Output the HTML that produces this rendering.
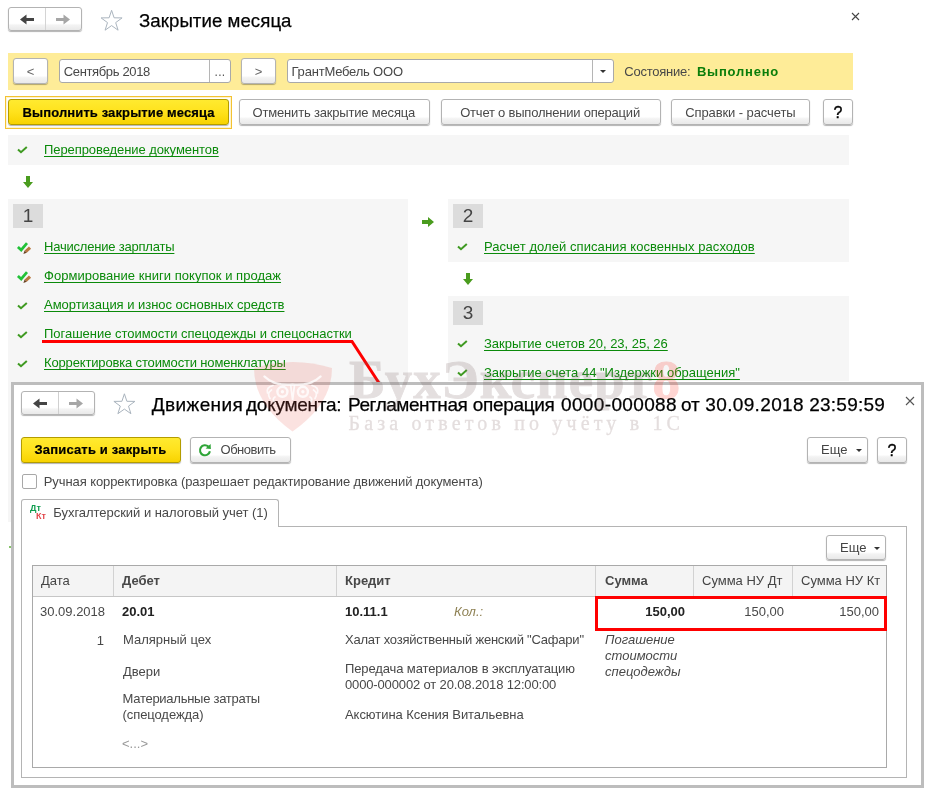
<!DOCTYPE html>
<html lang="ru">
<head>
<meta charset="utf-8">
<title>Закрытие месяца</title>
<style>
html,body{margin:0;padding:0;background:#fff;}
body{width:932px;height:793px;position:relative;overflow:hidden;font-family:"Liberation Sans",sans-serif;font-size:13px;color:#333;}
.a{position:absolute;white-space:nowrap;}
.btn{position:absolute;box-sizing:border-box;border:1px solid #b3b3b3;border-radius:3px;background:linear-gradient(#ffffff 0%,#ffffff 70%,#f3f3f3 78%,#e9e9e9 100%);box-shadow:0 1px 1px rgba(0,0,0,.3);text-align:center;white-space:nowrap;color:#444;}
.ybtn{position:absolute;box-sizing:border-box;border:1px solid #b39c00;border-radius:3px;background:linear-gradient(#ffea30 0%,#ffe21c 50%,#f8d300 100%);box-shadow:0 1px 1px rgba(0,0,0,.3);text-align:center;white-space:nowrap;color:#111;font-weight:bold;}
.inp{position:absolute;box-sizing:border-box;border:1px solid #a9a9a9;border-radius:3px;background:#fff;white-space:nowrap;color:#333;}
.lnk{position:absolute;white-space:nowrap;color:#0a8a0a;text-decoration:underline;text-decoration-thickness:1px;text-underline-offset:2px;text-decoration-skip-ink:none;}
.gray{position:absolute;background:#f6f6f6;}
.num{position:absolute;background:#dcdcdc;color:#444;font-size:19px;text-align:center;}
svg{position:absolute;overflow:visible;}
.t{position:absolute;white-space:nowrap;color:#484848;}
</style>
</head>
<body>
<div id="root" style="position:absolute;left:0;top:0;width:932px;height:793px;overflow:hidden;will-change:transform;">

<!-- ================= MAIN WINDOW ================= -->
<div id="nav1" class="btn" style="left:8px;top:7px;width:74px;height:24px;"></div>
<div class="a" style="left:45px;top:8px;width:1px;height:22px;background:#d4d4d4;"></div>
<svg style="left:20px;top:14px;" width="14" height="11" viewBox="0 0 14 11"><path d="M0 5.5 L6.5 0.5 L6.5 4 L14 4 L14 7 L6.5 7 L6.5 10.5 Z" fill="#444"/></svg>
<svg style="left:56px;top:14px;" width="14" height="11" viewBox="0 0 14 11"><path d="M14 5.5 L7.5 0.5 L7.5 4 L0 4 L0 7 L7.5 7 L7.5 10.5 Z" fill="#a6a6a6"/></svg>
<svg style="left:0;top:0;" width="140" height="40" viewBox="0 0 140 40"><path d="M111.6 10.3 L114.1 17.8 L122.1 17.9 L115.7 22.6 L118.1 30.2 L111.6 25.6 L105.1 30.2 L107.5 22.6 L101.1 17.9 L109.1 17.8 Z" fill="#fff" stroke="#aab4be" stroke-width="1"/></svg>
<div class="a" style="left:139px;top:10px;letter-spacing:0.049px;font-size:18.67px;color:#000;-webkit-text-stroke:0.25px #000;">Закрытие месяца</div>
<svg style="left:852px;top:13px;" width="7" height="7" viewBox="0 0 7 7"><path d="M0 0 L7 7 M7 0 L0 7" stroke="#444" stroke-width="1.1" fill="none"/></svg>

<div id="yband" class="a" style="left:8px;top:53px;width:845px;height:37px;background:#feec98;"></div>
<div class="btn" style="left:13px;top:58px;width:35px;height:26px;line-height:25px;color:#666;">&lt;</div>
<div class="inp" style="left:59px;top:59px;width:172px;height:24px;"></div>
<div class="t" style="left:63.75px;top:64px;letter-spacing:-0.357px;">Сентябрь 2018</div>
<div class="a" style="left:209px;top:60px;width:1px;height:22px;background:#b5b5b5;"></div>
<div class="a" style="left:214.5px;top:65px;color:#555;font-size:12px;letter-spacing:0.3px;">...</div>
<div class="btn" style="left:241px;top:58px;width:35px;height:26px;line-height:25px;color:#666;">&gt;</div>
<div class="inp" style="left:287px;top:59px;width:327px;height:24px;"></div>
<div class="t" style="left:291.5px;top:64px;letter-spacing:-0.205px;">ГрантМебель ООО</div>
<div class="a" style="left:592px;top:60px;width:1px;height:22px;background:#b5b5b5;"></div>
<svg style="left:600px;top:70px;" width="6" height="3" viewBox="0 0 6 3"><path d="M0 0 L6 0 L3 3 Z" fill="#333"/></svg>
<div class="t" style="left:624.3px;top:64px;letter-spacing:-0.254px;">Состояние:</div>
<div class="a" style="left:696.9px;top:64px;letter-spacing:0.788px;color:#0a7d0a;font-weight:bold;">Выполнено</div>

<div class="a" style="left:5px;top:96px;width:227px;height:33px;box-sizing:border-box;border:1px solid #f3c232;box-shadow:inset 0 0 0 1px #fdf3cf;background:#fff;"></div>
<div id="yb1" class="ybtn" style="left:8px;top:99px;width:221px;height:26px;"></div>
<div class="a" style="left:22.5px;top:105px;letter-spacing:0.117px;color:#000;font-weight:bold;-webkit-text-stroke:0.2px #000;">Выполнить закрытие месяца</div>
<div class="btn" style="left:239px;top:99px;width:191px;height:26px;"></div>
<div class="t" style="left:252.6px;top:105px;letter-spacing:-0.183px;">Отменить закрытие месяца</div>
<div class="btn" style="left:441px;top:99px;width:220px;height:26px;"></div>
<div class="t" style="left:460.2px;top:105px;letter-spacing:-0.213px;">Отчет о выполнении операций</div>
<div class="btn" style="left:671px;top:99px;width:139px;height:26px;"></div>
<div class="t" style="left:685.2px;top:105px;letter-spacing:-0.093px;">Справки - расчеты</div>
<div class="btn" style="left:823px;top:99px;width:30px;height:26px;line-height:25px;font-size:16px;color:#000;-webkit-text-stroke:0.35px #000;">?</div>

<div class="gray" style="left:8px;top:135px;width:841px;height:30px;"></div>
<div class="lnk" style="left:44px;top:142px;letter-spacing:-0.077px;">Перепроведение документов</div>

<!-- block 1 -->
<div class="gray" style="left:8px;top:199px;width:400px;height:323px;"></div>
<div class="a" style="left:9px;top:546px;width:2px;height:2px;background:#86c46a;"></div>
<div class="num" style="left:13px;top:204px;width:30px;height:24px;line-height:24px;">1</div>
<div class="lnk" style="left:44px;top:239px;letter-spacing:-0.204px;">Начисление зарплаты</div>
<div class="lnk" style="left:44px;top:268px;letter-spacing:0.035px;">Формирование книги покупок и продаж</div>
<div class="lnk" style="left:44px;top:297px;letter-spacing:-0.028px;">Амортизация и износ основных средств</div>
<div class="lnk" style="left:44px;top:326px;letter-spacing:-0.025px;">Погашение стоимости спецодежды и спецоснастки</div>
<div class="lnk" style="left:44px;top:355px;letter-spacing:-0.153px;">Корректировка стоимости номенклатуры</div>

<!-- block 2 -->
<div class="gray" style="left:448px;top:199px;width:401px;height:63px;"></div>
<div class="num" style="left:453px;top:204px;width:30px;height:24px;line-height:24px;">2</div>
<div class="lnk" style="left:484px;top:239px;letter-spacing:0.065px;">Расчет долей списания косвенных расходов</div>

<!-- block 3 -->
<div class="gray" style="left:448px;top:296px;width:401px;height:85px;"></div>
<div class="num" style="left:453px;top:301px;width:30px;height:24px;line-height:24px;">3</div>
<div class="lnk" style="left:484px;top:336px;letter-spacing:-0.021px;">Закрытие счетов 20, 23, 25, 26</div>
<div class="lnk" style="left:484px;top:365px;letter-spacing:-0.003px;">Закрытие счета 44 "Издержки обращения"</div>

<svg style="left:17px;top:146px;" width="11" height="8" viewBox="0 0 11 8"><path d="M1 3.4 L4 6.2 L9.8 1" fill="none" stroke="#3f9a22" stroke-width="2"/></svg>
<svg style="left:23px;top:176px;" width="10" height="12" viewBox="0 0 10 12"><path d="M3 0 L7 0 L7 6 L10 6 L5 12 L0 6 L3 6 Z" fill="#4a9c1e"/></svg>
<svg style="left:17px;top:242px;" width="15" height="13" viewBox="0 0 15 13"><path d="M0.9 4.9 L4.2 8 L10 1.2" fill="none" stroke="#22c238" stroke-width="2.7"/><path d="M8.7 9.7 L13 5.7" fill="none" stroke="#b8773e" stroke-width="3.1"/><path d="M7.6 8.6 L9.8 10.8 L6.4 12 Z" fill="#6b4526"/></svg>
<svg style="left:17px;top:271px;" width="15" height="13" viewBox="0 0 15 13"><path d="M0.9 4.9 L4.2 8 L10 1.2" fill="none" stroke="#22c238" stroke-width="2.7"/><path d="M8.7 9.7 L13 5.7" fill="none" stroke="#b8773e" stroke-width="3.1"/><path d="M7.6 8.6 L9.8 10.8 L6.4 12 Z" fill="#6b4526"/></svg>
<svg style="left:17px;top:302px;" width="11" height="8" viewBox="0 0 11 8"><path d="M1 3.4 L4 6.2 L9.8 1" fill="none" stroke="#3f9a22" stroke-width="2"/></svg>
<svg style="left:17px;top:331px;" width="11" height="8" viewBox="0 0 11 8"><path d="M1 3.4 L4 6.2 L9.8 1" fill="none" stroke="#3f9a22" stroke-width="2"/></svg>
<svg style="left:17px;top:360px;" width="11" height="8" viewBox="0 0 11 8"><path d="M1 3.4 L4 6.2 L9.8 1" fill="none" stroke="#3f9a22" stroke-width="2"/></svg>
<svg style="left:422px;top:217px;" width="12" height="10" viewBox="0 0 12 10"><path d="M0 3 L6 3 L6 0 L12 5 L6 10 L6 7 L0 7 Z" fill="#4a9c1e"/></svg>
<svg style="left:457px;top:243px;" width="11" height="8" viewBox="0 0 11 8"><path d="M1 3.4 L4 6.2 L9.8 1" fill="none" stroke="#3f9a22" stroke-width="2"/></svg>
<svg style="left:463px;top:273px;" width="10" height="12" viewBox="0 0 10 12"><path d="M3 0 L7 0 L7 6 L10 6 L5 12 L0 6 L3 6 Z" fill="#4a9c1e"/></svg>
<svg style="left:457px;top:340px;" width="11" height="8" viewBox="0 0 11 8"><path d="M1 3.4 L4 6.2 L9.8 1" fill="none" stroke="#3f9a22" stroke-width="2"/></svg>
<svg style="left:457px;top:369px;" width="11" height="8" viewBox="0 0 11 8"><path d="M1 3.4 L4 6.2 L9.8 1" fill="none" stroke="#3f9a22" stroke-width="2"/></svg>
<svg style="left:0;top:0;" width="932" height="400" viewBox="0 0 932 400"><path d="M42 341.5 L352 341.5 L379 383" fill="none" stroke="#ff0000" stroke-width="3" stroke-linejoin="miter"/></svg>
<!-- ================= DIALOG ================= -->
<div id="dlg" class="a" style="left:11px;top:382px;width:913px;height:406px;box-sizing:border-box;border:3px solid #bdbdbd;background:#fff;"></div>

<div id="nav2" class="btn" style="left:21px;top:391px;width:74px;height:24px;"></div>
<div class="a" style="left:58px;top:392px;width:1px;height:22px;background:#d0d0d0;"></div>
<svg style="left:33px;top:398px;" width="14" height="11" viewBox="0 0 14 11"><path d="M0 5.5 L6.5 0.5 L6.5 4 L14 4 L14 7 L6.5 7 L6.5 10.5 Z" fill="#444"/></svg>
<svg style="left:69px;top:398px;" width="14" height="11" viewBox="0 0 14 11"><path d="M14 5.5 L7.5 0.5 L7.5 4 L0 4 L0 7 L7.5 7 L7.5 10.5 Z" fill="#a6a6a6"/></svg>
<svg style="left:0;top:380px;" width="160" height="40" viewBox="0 380 160 40"><path d="M124.4 393.8 L126.9 401.3 L134.9 401.4 L128.5 406.1 L130.9 413.7 L124.4 409.1 L117.9 413.7 L120.3 406.1 L113.9 401.4 L121.9 401.3 Z" fill="#fff" stroke="#aab4be" stroke-width="1"/></svg>
<div class="a" style="left:151.8px;top:394px;letter-spacing:0.393px;font-size:19px;color:#000;-webkit-text-stroke:0.25px #000;">Движения</div>
<div class="a" style="left:246.0px;top:394px;letter-spacing:-0.26px;font-size:19px;color:#000;-webkit-text-stroke:0.25px #000;">документа:</div>
<div class="a" style="left:348.1px;top:394px;letter-spacing:-0.459px;font-size:19px;color:#000;-webkit-text-stroke:0.25px #000;">Регламентная</div>
<div class="a" style="left:472.8px;top:394px;letter-spacing:-0.335px;font-size:19px;color:#000;-webkit-text-stroke:0.25px #000;">операция</div>
<div class="a" style="left:561.0px;top:394px;letter-spacing:0.36px;font-size:19px;color:#000;-webkit-text-stroke:0.25px #000;">0000-000088</div>
<div class="a" style="left:680.9px;top:394px;letter-spacing:0.041px;font-size:19px;color:#000;-webkit-text-stroke:0.25px #000;">от</div>
<div class="a" style="left:705.3px;top:394px;letter-spacing:0.356px;font-size:19px;color:#000;-webkit-text-stroke:0.25px #000;">30.09.2018</div>
<div class="a" style="left:809.3px;top:394px;letter-spacing:0.219px;font-size:19px;color:#000;-webkit-text-stroke:0.25px #000;">23:59:59</div>
<svg style="left:905.5px;top:397px;" width="8" height="8" viewBox="0 0 8 8"><path d="M0 0 L8 8 M8 0 L0 8" stroke="#555" stroke-width="1.1" fill="none"/></svg>

<div id="yb2" class="ybtn" style="left:21px;top:437px;width:160px;height:26px;"></div>
<div class="a" style="left:34.5px;top:442px;letter-spacing:0.171px;color:#000;font-weight:bold;-webkit-text-stroke:0.2px #000;">Записать и закрыть</div>
<div id="upd" class="btn" style="left:190px;top:437px;width:101px;height:26px;"></div>
<div class="t" style="left:220.5px;top:442px;letter-spacing:-0.468px;">Обновить</div>
<svg style="left:198px;top:443px;" width="14" height="14" viewBox="0 0 14 14"><path d="M10.4 3.6 A5 5 0 1 0 11.9 8.2" fill="none" stroke="#2fa538" stroke-width="2.1"/><path d="M7.6 5.6 L12.9 5.9 L12.6 0.9 Z" fill="#2fa538"/></svg>
<div id="more1" class="btn" style="left:807px;top:437px;width:61px;height:26px;line-height:24px;text-align:left;padding-left:13px;">Еще</div>
<svg style="left:856px;top:449px;" width="6" height="3" viewBox="0 0 6 3"><path d="M0 0 L6 0 L3 3 Z" fill="#333"/></svg>
<div class="btn" style="left:877px;top:437px;width:30px;height:26px;line-height:25px;font-size:16px;color:#000;-webkit-text-stroke:0.35px #000;">?</div>

<div class="a" style="left:22px;top:474px;width:15px;height:15px;box-sizing:border-box;border:1px solid #a8a8a8;border-radius:2px;background:#fff;"></div>
<div class="t" style="left:43.75px;top:474px;letter-spacing:-0.085px;">Ручная корректировка (разрешает редактирование движений документа)</div>

<!-- tab panel -->
<div id="panel" class="a" style="left:21px;top:526px;width:886px;height:252px;box-sizing:border-box;border:1px solid #b4b4b4;"></div>
<div id="tab" class="a" style="left:21px;top:499px;width:258px;height:28px;box-sizing:border-box;border:1px solid #b4b4b4;border-bottom:none;border-radius:3px 3px 0 0;background:#fff;"></div>
<div class="a" style="left:30px;top:504px;font-size:9px;font-weight:bold;color:#0f9d4f;line-height:9px;">Дт</div>
<div class="a" style="left:36px;top:511.5px;font-size:9px;font-weight:bold;color:#e2474b;line-height:9px;">Кт</div>
<div class="t" style="left:53.3px;top:505px;letter-spacing:-0.036px;">Бухгалтерский и налоговый учет (1)</div>

<div id="more2" class="btn" style="left:826px;top:535px;width:60px;height:25px;line-height:23px;text-align:left;padding-left:13px;">Еще</div>
<svg style="left:874px;top:547px;" width="6" height="3" viewBox="0 0 6 3"><path d="M0 0 L6 0 L3 3 Z" fill="#333"/></svg>

<!-- table -->
<div id="tbl" class="a" style="left:32px;top:565px;width:855px;height:203px;box-sizing:border-box;border:1px solid #a9a9a9;background:#fff;"></div>
<div id="thead" class="a" style="left:33px;top:566px;width:853px;height:30px;background:#f4f4f4;border-bottom:1px solid #c6c6c6;"></div>
<div class="a" style="left:113px;top:566px;width:1px;height:30px;background:#d2d2d2;"></div>
<div class="a" style="left:336px;top:566px;width:1px;height:30px;background:#d2d2d2;"></div>
<div class="a" style="left:595px;top:566px;width:1px;height:30px;background:#d2d2d2;"></div>
<div class="a" style="left:693px;top:566px;width:1px;height:30px;background:#d2d2d2;"></div>
<div class="a" style="left:792px;top:566px;width:1px;height:30px;background:#d2d2d2;"></div>
<div class="t" style="left:41px;top:573px;color:#444;">Дата</div>
<div class="t" style="left:122px;top:573px;font-weight:bold;">Дебет</div>
<div class="t" style="left:345px;top:573px;font-weight:bold;">Кредит</div>
<div class="t" style="left:605px;top:573px;font-weight:bold;">Сумма</div>
<div class="t" style="left:702px;top:573px;color:#444;">Сумма НУ Дт</div>
<div class="t" style="left:801px;top:573px;color:#444;">Сумма НУ Кт</div>

<div class="t" style="left:40px;top:604px;">30.09.2018</div>
<div class="t" style="left:40px;top:633px;width:64px;text-align:right;">1</div>
<div class="t" style="left:122px;top:604px;font-weight:bold;color:#222;">20.01</div>
<div class="t" style="left:123px;top:632px;">Малярный цех</div>
<div class="t" style="left:123px;top:664px;">Двери</div>
<div class="t" style="left:122.5px;top:691px;letter-spacing:-0.265px;">Материальные затраты</div>
<div class="t" style="left:122.5px;top:707px;letter-spacing:-0.078px;">(спецодежда)</div>
<div class="t" style="left:122px;top:736px;color:#999;">&lt;...&gt;</div>

<div class="t" style="left:345px;top:604px;font-weight:bold;color:#222;">10.11.1</div>
<div class="t" style="left:454px;top:604px;font-style:italic;color:#8f8255;">Кол.:</div>
<div class="t" style="left:345px;top:632px;letter-spacing:-0.216px;">Халат хозяйственный женский "Сафари"</div>
<div class="t" style="left:345px;top:661px;letter-spacing:-0.119px;">Передача материалов в эксплуатацию</div>
<div class="t" style="left:345px;top:677px;letter-spacing:-0.143px;">0000-000002 от 20.08.2018 12:00:00</div>
<div class="t" style="left:345px;top:707px;letter-spacing:-0.051px;">Аксютина Ксения Витальевна</div>

<div class="t" style="left:605px;top:604px;width:80px;text-align:right;font-weight:bold;color:#222;">150,00</div>
<div class="t" style="left:704px;top:604px;width:80px;text-align:right;">150,00</div>
<div class="t" style="left:799px;top:604px;width:80px;text-align:right;">150,00</div>
<div class="t" style="left:605px;top:632px;line-height:16px;font-style:italic;">Погашение<br>стоимости<br>спецодежды</div>

<div id="red" class="a" style="left:595px;top:596px;width:292px;height:35px;box-sizing:border-box;border:3px solid #ff0000;"></div>

<!-- watermark -->
<svg id="wm" style="left:250px;top:355px;" width="90" height="80" viewBox="250 355 90 80">
  <path d="M254 368 Q293 356 332 368 Q332 404 292.5 431.5 Q254 404 254 368 Z" fill="rgba(235,95,85,0.18)"/>
  <g fill="none" stroke="rgba(255,255,255,0.8)" stroke-linecap="round">
    <path d="M264.5 376.5 Q274 386 292.5 384.5 Q311 386 320.5 376.5" stroke-width="2.4"/>
    <circle cx="282.4" cy="391.8" r="5" stroke-width="2.4"/>
    <circle cx="302.9" cy="391.8" r="5" stroke-width="2.4"/>
    <path d="M290.8 386 L292.6 400 L294.4 386" stroke-width="1.8"/>
    <path d="M273 385.5 Q266 387 267.5 393 M271.5 390 Q266.5 393 270 398.5 M275 397 Q272 399 274 401.5" stroke-width="1.7"/>
    <path d="M312 385.5 Q319 387 317.5 393 M313.500 390 Q318.5 393 315 398.5 M310 397 Q313 399 311 401.5" stroke-width="1.7"/>
  </g>
  <circle cx="282.4" cy="391.8" r="1.7" fill="rgba(255,255,255,0.85)"/>
  <circle cx="302.9" cy="391.8" r="1.7" fill="rgba(255,255,255,0.85)"/>
</svg>
<div id="wm1" class="a" style="left:349px;top:350px;font-family:'Liberation Serif',serif;font-weight:bold;font-size:55px;line-height:60px;letter-spacing:0.85px;color:#7a6060;-webkit-text-stroke:0.8px #7a6060;opacity:0.2;">БухЭксперт<span style="color:#ff3020;-webkit-text-stroke:0.8px #ff3020;">8</span></div>
<div id="wm2" class="a" style="left:348.5px;top:411px;font-family:'Liberation Serif',serif;font-size:20px;line-height:24px;letter-spacing:4.15px;color:#806464;-webkit-text-stroke:0.35px #806464;opacity:0.21;">База ответов по учёту в 1С</div>

</div>
</body>
</html>
